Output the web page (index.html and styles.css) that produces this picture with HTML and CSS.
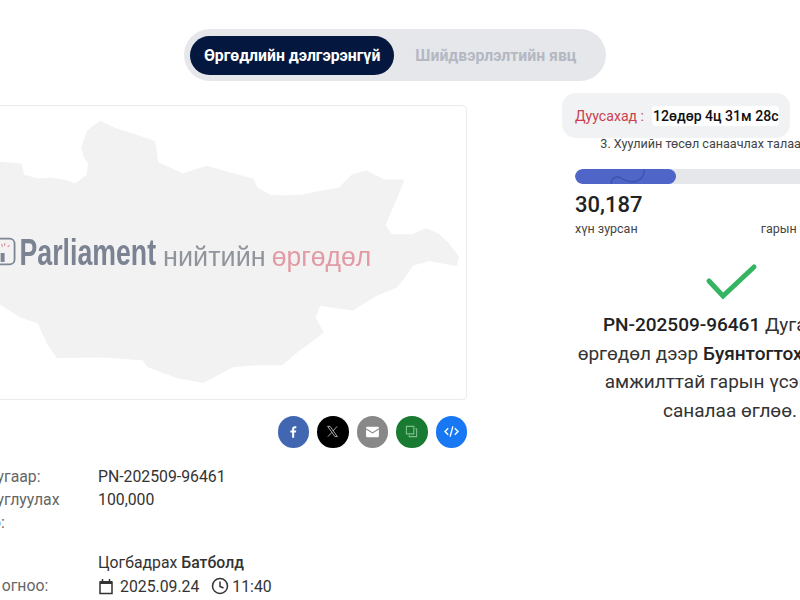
FILE: index.html
```html
<!DOCTYPE html>
<html lang="mn">
<head>
<meta charset="utf-8">
<title>Өргөдлийн дэлгэрэнгүй</title>
<link rel="stylesheet" href="styles.css">
</head>
<body>
<div class="page">
  <div class="tabs-wrap">
    <div class="tabs">
      <div class="tab tab-active">Өргөдлийн дэлгэрэнгүй</div>
      <div class="tab">Шийдвэрлэлтийн явц</div>
    </div>
  </div>
  <div class="columns">
    <div class="col-left">
      <div class="hero">
        <svg class="hero-art" viewBox="-108 105 575 295" preserveAspectRatio="none">
          <path fill="#f2f2f3" stroke="#f2f2f3" stroke-width="2" stroke-linejoin="round" d="M-101 240L-90 205L-60 180L-30 160L0 162L20 164L23 175L37 179L50 178L63 180L75 184L87 175L89 163L84 155L82 147L85 137L88 130L100 121L115 128L133 134L154 141L156 152L157 162L170 168L183 174L195 170L207 166L230 173L253 179L257 188L270 195L285 196L303 195L322 191L340 188L353 175L367 171L385 180L404 180L395 202L385 225L392 235L413 235L427 229L440 235L450 245L459 257L457 265L430 260L413 265L405 277L397 287L377 295L353 310L320 305L315 318L323 333L300 350L282 365L257 365L233 367L203 383L177 378L148 367L143 360L100 357L57 358L47 343L38 323L20 317L0 304L-40 290L-80 275Z"/>
          <rect x="-12" y="238.500" width="26" height="26" rx="5" fill="none" stroke="#7d8494" stroke-width="1.800"/>
          <path d="M4 243v3M9 245l-2 2M1 244l1 3" stroke="#e29aa5" stroke-width="1.200" fill="none"/>
          <path d="M0 253h4v9h-4z" fill="#7d8494"/>
          <text class="logo-main" x="19" y="265" textLength="137" lengthAdjust="spacingAndGlyphs">Parliament</text>
          <text class="logo-sub" x="163" y="266" textLength="103" lengthAdjust="spacingAndGlyphs">нийтийн</text>
          <text class="logo-accent" x="272" y="266" textLength="100" lengthAdjust="spacingAndGlyphs">өргөдөл</text>
        </svg>
      </div>
      <div class="share">
        <span class="share-btn share-fb">
          <svg width="14" height="14" viewBox="0 0 24 24"><path fill="#fff" d="M14 22v-9h3l.5-3.500H14V7.300c0-1 .4-1.800 1.800-1.800h1.900V2.300c-.5-.1-1.500-.2-2.700-.2-2.700 0-4.500 1.600-4.500 4.700v2.700H7.500V13h3v9z"/></svg>
        </span>
        <span class="share-btn share-x">
          <svg width="13" height="13" viewBox="0 0 24 24"><path fill="none" stroke="#ccc" stroke-width="1.500" d="M3 2.500h4.500L21 21.500h-4.500zM20.500 2.500L13 11M11 13.500l-7.500 8"/></svg>
        </span>
        <span class="share-btn share-mail">
          <svg width="15" height="12" viewBox="0 0 16 14"><path fill="#fff" d="M1.500 1h13c.5 0 1 .4 1 1v.5L8 7.300.5 2.500V2c0-.6.500-1 1-1zM.5 4l7.500 4.800L15.500 4v8c0 .6-.5 1-1 1h-13c-.5 0-1-.4-1-1z"/></svg>
        </span>
        <span class="share-btn share-copy">
          <svg width="13" height="13" viewBox="0 0 14 14"><path fill="none" stroke="#7fc08d" stroke-width="1.200" d="M1.500 1.500h8v8h-8zM11 4h1.500v8.500H4.500V11"/></svg>
        </span>
        <span class="share-btn share-code">
          <svg width="15" height="13" viewBox="0 0 16 14"><path fill="none" stroke="#fff" stroke-width="1.500" d="M4.500 3.500L1 7l3.500 3.500M11.500 3.500L15 7l-3.500 3.500M9.500 1.500L6.500 12.500"/></svg>
        </span>
      </div>
      <div class="info">
        <div class="info-label">Өргөдлийн дугаар:</div>
        <div class="info-value">PN-202509-96461</div>
        <div class="info-label">Гарын үсэг цуглуулах иргэдийн тоо:</div>
        <div class="info-value">100,000</div>
        <div class="info-label info-gap">Санаачлагч:</div>
        <div class="info-value info-gap">Цогбадрах <b class="strong">Батболд</b></div>
        <div class="info-label">Нийтлэгдсэн огноо:</div>
        <div class="info-value info-date">
          <svg class="date-icon" width="16" height="17" viewBox="0 0 16 17"><path fill="none" stroke="#333" stroke-width="1.500" d="M2 4h12v11.500H2zM4.500 1v3M11.500 1v3"/><path fill="#333" d="M2 3h12v3H2z"/></svg>
          <span>2025.09.24</span>
          <svg class="clock-icon" width="18" height="18" viewBox="0 0 18 18"><circle cx="9" cy="9" r="7.500" fill="none" stroke="#333" stroke-width="1.500"/><path fill="none" stroke="#333" stroke-width="1.500" d="M9 4.500v5l3.500 1.500"/></svg>
          <span>11:40</span>
        </div>
      </div>
    </div>
    <div class="col-right">
      <div class="timer">
        <span class="timer-label">Дуусахад :</span>
        <span class="timer-value">12өдөр 4ц 31м 28с</span>
      </div>
      <div class="title">3. Хуулийн төсөл санаачлах талаар өргөдөл</div>
      <div class="progress">
        <div class="progress-fill" style="width:32.600%">
          <svg class="progress-wave" width="101" height="15" viewBox="0 0 101 15"><path fill="none" stroke="#3d4fa8" stroke-width="1.200" d="M36 16c0-7 5-10 10-7s12 6 18 2 5-8 5-11"/></svg>
        </div>
      </div>
      <div class="stats">
        <div class="stat">
          <div class="stat-num">30,187</div>
          <div class="stat-text">хүн зурсан</div>
        </div>
        <div class="stat stat-end">
          <div class="stat-num stat-num-end">100,000</div>
          <div class="stat-text">гарын үсэг цуглуулах</div>
        </div>
      </div>
      <svg class="check" width="54" height="40" viewBox="0 0 54 40"><path fill="none" stroke="#35b561" stroke-width="5" stroke-linecap="round" d="M4 18l14 15L49 4"/></svg>
      <p class="message">
        <b class="message-strong">PN-202509-96461</b> Дугаартай<br>
        өргөдөл дээр <b class="message-strong">Буянтогтох</b> Батболд<br>
        амжилттай гарын үсэг зурж<br>
        саналаа өглөө.
      </p>
    </div>
  </div>
</div>
</body>
</html>
```

FILE: styles.css
```css
html, body {
  margin: 0;
  padding: 0;
  height: 600px;
  overflow: hidden;
  background: #fff;
}
body {
  font-family: Roboto, "Noto Sans", sans-serif;
  color: #333;
}
.page {
  width: 1006px;
  margin-left: -108px;
  padding-top: 29px;
}
.tabs-wrap {
  display: flex;
  justify-content: center;
}
.tabs {
  display: flex;
  align-items: center;
  gap: 21px;
  width: 422px;
  height: 52px;
  box-sizing: border-box;
  padding: 0 6px;
  background: #e5e7eb;
  border-radius: 26px;
}
.tab {
  font-size: 15.800px;
  font-weight: 700;
  color: #b4b8c2;
  line-height: 39px;
}
.tab-active {
  padding: 0 14px;
  background: #04173f;
  color: #fff;
  border-radius: 20px;
}
.columns {
  display: flex;
  align-items: flex-start;
  gap: 95px;
  padding-top: 12px;
}
.col-left {
  width: 575px;
  flex: none;
  padding-top: 12px;
}
.hero {
  height: 293px;
  border: 1px solid #e9ecef;
  border-radius: 4px;
  overflow: hidden;
}
.hero-art {
  display: block;
  width: 100%;
  height: 100%;
  filter: blur(0.5px);
}
.logo-main {
  font-family: "Liberation Sans Narrow", "Liberation Sans", sans-serif;
  font-size: 38px;
  font-weight: 700;
  fill: #7b8393;
}
.logo-sub, .logo-accent {
  font-family: "Liberation Sans", sans-serif;
  font-size: 28px;
}
.logo-sub { fill: #90949b; }
.logo-accent { fill: #e29aa5; }
.share {
  display: flex;
  justify-content: flex-end;
  gap: 8px;
  margin-top: 16px;
}
.share-btn {
  display: flex;
  align-items: center;
  justify-content: center;
  width: 31.500px;
  height: 31.500px;
  border-radius: 50%;
}
.share-fb { background: #4267b2; }
.share-x { background: #000; }
.share-mail { background: #888; }
.share-copy { background: #197a32; }
.share-code { background: #1877f2; }
.info {
  display: grid;
  grid-template-columns: 164px 1fr;
  column-gap: 32px;
  margin-top: 17px;
  margin-left: 10px;
  font-size: 15.800px;
  line-height: 23px;
}
.info-label { color: #666; }
.info-value { color: #333; }
.info-gap { margin-top: 17px; }
.info-date {
  display: flex;
  align-items: center;
  gap: 6px;
  margin-top: 1px;
}
.date-icon { margin-right: 0; }
.clock-icon { margin-left: 6px; margin-right: -3px; }
.strong { font-weight: 500; }
.col-right {
  width: 336px;
  flex: none;
  display: flex;
  flex-direction: column;
  align-items: flex-start;
}
.timer {
  display: flex;
  align-items: center;
  gap: 8px;
  box-sizing: border-box;
  width: 228px;
  height: 45px;
  padding: 0 11px 0 13px;
  background: #f1f2f4;
  border-radius: 14px;
  white-space: nowrap;
}
.timer-label {
  font-size: 14.100px;
  color: #c9404f;
}
.timer-value {
  padding: 2px 0 2px 1px;
  background: #fff;
  border-radius: 4px;
  font-size: 14.100px;
  font-weight: 500;
  color: #111;
}
.title {
  width: 100%;
  margin-top: -2px;
  font-size: 12.600px;
  line-height: 15px;
  text-align: center;
  color: #444;
  white-space: nowrap;
}
.progress {
  width: 310px;
  height: 15px;
  margin: 18px 0 0 13px;
  background: #e5e7eb;
  border-radius: 8px;
  overflow: hidden;
}
.progress-fill {
  height: 100%;
  background: #4f66c8;
  border-radius: 8px;
  overflow: hidden;
}
.progress-wave { display: block; }
.stats {
  display: flex;
  justify-content: space-between;
  width: 310px;
  margin: 8px 0 0 13px;
}
.stat-num {
  font-size: 22px;
  font-weight: 500;
  line-height: 26px;
  color: #222;
}
.stat-num-end { text-align: right; }
.stat-text {
  font-size: 12.500px;
  line-height: 16px;
  margin-top: 3px;
  color: #444;
}
.check {
  margin: 26px 0 0 143px;
}
.message {
  width: 336px;
  margin: 8px 0 0;
  text-align: center;
  font-size: 19px;
  line-height: 28.500px;
  color: #333;
  white-space: nowrap;
}
.message-strong { font-weight: 500; color: #222; }
```
